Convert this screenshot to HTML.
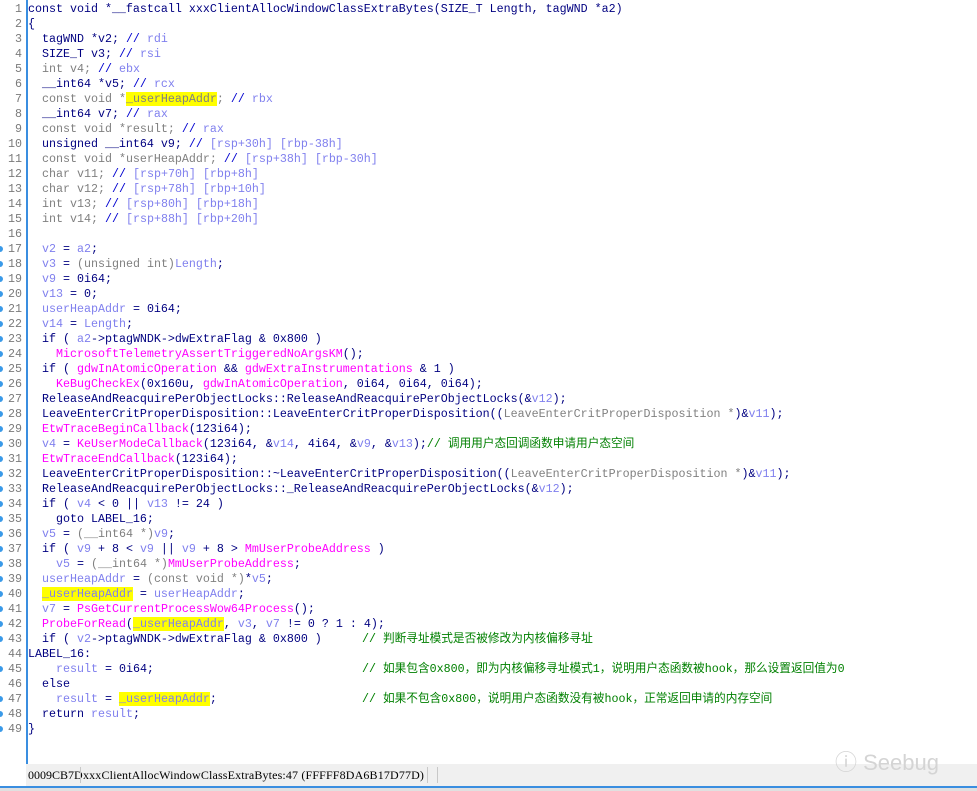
<!DOCTYPE html>
<html><head><meta charset="utf-8"><style>
body{margin:0;width:977px;height:791px;background:#fff;position:relative;overflow:hidden;font-family:"Liberation Mono","Noto Sans CJK SC",monospace;font-size:11.67px;}
.gut{position:absolute;left:26px;top:0;width:2px;height:764px;background:#3a8ee0;}
.l{position:absolute;left:0;height:15px;line-height:15px;width:977px;white-space:pre;margin-top:2px;}
.ln{position:absolute;left:0;width:22px;text-align:right;color:#7a7a7a;}
.dot{position:absolute;left:-3px;top:4px;width:6px;height:6px;border-radius:3px;background:#3a9ae8;}
.t{position:absolute;left:28px;color:#000080;}
.cm{position:absolute;left:362px;color:#008000;}
.g{color:#808080}.v{color:#8080ee}.f{color:#ff00ff}.c{color:#008000}.h{background:#ffff00}.cb{color:#0000d0}
.status{position:absolute;left:26px;top:764px;width:951px;height:22px;background:#f0f0f0;font-family:"Liberation Serif",serif;font-size:12px;line-height:22px;color:#000;}
.status span{position:absolute;top:0;white-space:nowrap}
.sep{position:absolute;top:3px;width:1px;height:16px;background:#c8c8c8}
.bot{position:absolute;left:0;top:786px;width:977px;height:2px;background:#3a8ee0}
.bot2{position:absolute;left:0;top:788px;width:977px;height:3px;background:#e0e0e0}
.wm{position:absolute;left:835px;top:745px;color:#d4d4d4;font-family:"Liberation Sans",sans-serif;font-size:22px;}
</style></head><body>
<div class="gut"></div>
<div class="l" style="top:0"><span class="ln">1</span><span class="t">const void *__fastcall xxxClientAllocWindowClassExtraBytes(SIZE_T Length, tagWND *a2)</span></div>
<div class="l" style="top:15px"><span class="ln">2</span><span class="t">{</span></div>
<div class="l" style="top:30px"><span class="ln">3</span><span class="t">  tagWND *v2; <span class="cb">//</span> <span class="v">rdi</span></span></div>
<div class="l" style="top:45px"><span class="ln">4</span><span class="t">  SIZE_T v3; <span class="cb">//</span> <span class="v">rsi</span></span></div>
<div class="l" style="top:60px"><span class="ln">5</span><span class="t">  <span class="g">int v4;</span> <span class="cb">//</span> <span class="v">ebx</span></span></div>
<div class="l" style="top:75px"><span class="ln">6</span><span class="t">  __int64 *v5; <span class="cb">//</span> <span class="v">rcx</span></span></div>
<div class="l" style="top:90px"><span class="ln">7</span><span class="t">  <span class="g">const void *<span class="h">_userHeapAddr</span>;</span> <span class="cb">//</span> <span class="v">rbx</span></span></div>
<div class="l" style="top:105px"><span class="ln">8</span><span class="t">  __int64 v7; <span class="cb">//</span> <span class="v">rax</span></span></div>
<div class="l" style="top:120px"><span class="ln">9</span><span class="t">  <span class="g">const void *result;</span> <span class="cb">//</span> <span class="v">rax</span></span></div>
<div class="l" style="top:135px"><span class="ln">10</span><span class="t">  unsigned __int64 v9; <span class="cb">//</span> <span class="v">[rsp+30h] [rbp-38h]</span></span></div>
<div class="l" style="top:150px"><span class="ln">11</span><span class="t">  <span class="g">const void *userHeapAddr;</span> <span class="cb">//</span> <span class="v">[rsp+38h] [rbp-30h]</span></span></div>
<div class="l" style="top:165px"><span class="ln">12</span><span class="t">  <span class="g">char v11;</span> <span class="cb">//</span> <span class="v">[rsp+70h] [rbp+8h]</span></span></div>
<div class="l" style="top:180px"><span class="ln">13</span><span class="t">  <span class="g">char v12;</span> <span class="cb">//</span> <span class="v">[rsp+78h] [rbp+10h]</span></span></div>
<div class="l" style="top:195px"><span class="ln">14</span><span class="t">  <span class="g">int v13;</span> <span class="cb">//</span> <span class="v">[rsp+80h] [rbp+18h]</span></span></div>
<div class="l" style="top:210px"><span class="ln">15</span><span class="t">  <span class="g">int v14;</span> <span class="cb">//</span> <span class="v">[rsp+88h] [rbp+20h]</span></span></div>
<div class="l" style="top:225px"><span class="ln">16</span></div>
<div class="l" style="top:240px"><i class="dot"></i><span class="ln">17</span><span class="t">  <span class="v">v2</span> = <span class="v">a2</span>;</span></div>
<div class="l" style="top:255px"><i class="dot"></i><span class="ln">18</span><span class="t">  <span class="v">v3</span> = <span class="g">(unsigned int)</span><span class="v">Length</span>;</span></div>
<div class="l" style="top:270px"><i class="dot"></i><span class="ln">19</span><span class="t">  <span class="v">v9</span> = 0i64;</span></div>
<div class="l" style="top:285px"><i class="dot"></i><span class="ln">20</span><span class="t">  <span class="v">v13</span> = 0;</span></div>
<div class="l" style="top:300px"><i class="dot"></i><span class="ln">21</span><span class="t">  <span class="v">userHeapAddr</span> = 0i64;</span></div>
<div class="l" style="top:315px"><i class="dot"></i><span class="ln">22</span><span class="t">  <span class="v">v14</span> = <span class="v">Length</span>;</span></div>
<div class="l" style="top:330px"><i class="dot"></i><span class="ln">23</span><span class="t">  if ( <span class="v">a2</span>-&gt;ptagWNDK-&gt;dwExtraFlag &amp; 0x800 )</span></div>
<div class="l" style="top:345px"><i class="dot"></i><span class="ln">24</span><span class="t">    <span class="f">MicrosoftTelemetryAssertTriggeredNoArgsKM</span>();</span></div>
<div class="l" style="top:360px"><i class="dot"></i><span class="ln">25</span><span class="t">  if ( <span class="f">gdwInAtomicOperation</span> &amp;&amp; <span class="f">gdwExtraInstrumentations</span> &amp; 1 )</span></div>
<div class="l" style="top:375px"><i class="dot"></i><span class="ln">26</span><span class="t">    <span class="f">KeBugCheckEx</span>(0x160u, <span class="f">gdwInAtomicOperation</span>, 0i64, 0i64, 0i64);</span></div>
<div class="l" style="top:390px"><i class="dot"></i><span class="ln">27</span><span class="t">  ReleaseAndReacquirePerObjectLocks::ReleaseAndReacquirePerObjectLocks(&amp;<span class="v">v12</span>);</span></div>
<div class="l" style="top:405px"><i class="dot"></i><span class="ln">28</span><span class="t">  LeaveEnterCritProperDisposition::LeaveEnterCritProperDisposition((<span class="g">LeaveEnterCritProperDisposition *</span>)&amp;<span class="v">v11</span>);</span></div>
<div class="l" style="top:420px"><i class="dot"></i><span class="ln">29</span><span class="t">  <span class="f">EtwTraceBeginCallback</span>(123i64);</span></div>
<div class="l" style="top:435px"><i class="dot"></i><span class="ln">30</span><span class="t">  <span class="v">v4</span> = <span class="f">KeUserModeCallback</span>(123i64, &amp;<span class="v">v14</span>, 4i64, &amp;<span class="v">v9</span>, &amp;<span class="v">v13</span>);<span class="c">// 调用用户态回调函数申请用户态空间</span></span></div>
<div class="l" style="top:450px"><i class="dot"></i><span class="ln">31</span><span class="t">  <span class="f">EtwTraceEndCallback</span>(123i64);</span></div>
<div class="l" style="top:465px"><i class="dot"></i><span class="ln">32</span><span class="t">  LeaveEnterCritProperDisposition::~LeaveEnterCritProperDisposition((<span class="g">LeaveEnterCritProperDisposition *</span>)&amp;<span class="v">v11</span>);</span></div>
<div class="l" style="top:480px"><i class="dot"></i><span class="ln">33</span><span class="t">  ReleaseAndReacquirePerObjectLocks::_ReleaseAndReacquirePerObjectLocks(&amp;<span class="v">v12</span>);</span></div>
<div class="l" style="top:495px"><i class="dot"></i><span class="ln">34</span><span class="t">  if ( <span class="v">v4</span> &lt; 0 || <span class="v">v13</span> != 24 )</span></div>
<div class="l" style="top:510px"><i class="dot"></i><span class="ln">35</span><span class="t">    goto LABEL_16;</span></div>
<div class="l" style="top:525px"><i class="dot"></i><span class="ln">36</span><span class="t">  <span class="v">v5</span> = <span class="g">(__int64 *)</span><span class="v">v9</span>;</span></div>
<div class="l" style="top:540px"><i class="dot"></i><span class="ln">37</span><span class="t">  if ( <span class="v">v9</span> + 8 &lt; <span class="v">v9</span> || <span class="v">v9</span> + 8 &gt; <span class="f">MmUserProbeAddress</span> )</span></div>
<div class="l" style="top:555px"><i class="dot"></i><span class="ln">38</span><span class="t">    <span class="v">v5</span> = <span class="g">(__int64 *)</span><span class="f">MmUserProbeAddress</span>;</span></div>
<div class="l" style="top:570px"><i class="dot"></i><span class="ln">39</span><span class="t">  <span class="v">userHeapAddr</span> = <span class="g">(const void *)</span>*<span class="v">v5</span>;</span></div>
<div class="l" style="top:585px"><i class="dot"></i><span class="ln">40</span><span class="t">  <span class="v h">_userHeapAddr</span> = <span class="v">userHeapAddr</span>;</span></div>
<div class="l" style="top:600px"><i class="dot"></i><span class="ln">41</span><span class="t">  <span class="v">v7</span> = <span class="f">PsGetCurrentProcessWow64Process</span>();</span></div>
<div class="l" style="top:615px"><i class="dot"></i><span class="ln">42</span><span class="t">  <span class="f">ProbeForRead</span>(<span class="v h">_userHeapAddr</span>, <span class="v">v3</span>, <span class="v">v7</span> != 0 ? 1 : 4);</span></div>
<div class="l" style="top:630px"><i class="dot"></i><span class="ln">43</span><span class="t">  if ( <span class="v">v2</span>-&gt;ptagWNDK-&gt;dwExtraFlag &amp; 0x800 )</span><span class="cm">// 判断寻址模式是否被修改为内核偏移寻址</span></div>
<div class="l" style="top:645px"><span class="ln">44</span><span class="t">LABEL_16:</span></div>
<div class="l" style="top:660px"><i class="dot"></i><span class="ln">45</span><span class="t">    <span class="v">result</span> = 0i64;</span><span class="cm">// 如果包含0x800，即为内核偏移寻址模式1，说明用户态函数被hook，那么设置返回值为0</span></div>
<div class="l" style="top:675px"><span class="ln">46</span><span class="t">  else</span></div>
<div class="l" style="top:690px"><i class="dot"></i><span class="ln">47</span><span class="t">    <span class="v">result</span> = <span class="v h">_userHeapAddr</span>;</span><span class="cm">// 如果不包含0x800，说明用户态函数没有被hook，正常返回申请的内存空间</span></div>
<div class="l" style="top:705px"><i class="dot"></i><span class="ln">48</span><span class="t">  return <span class="v">result</span>;</span></div>
<div class="l" style="top:720px"><i class="dot"></i><span class="ln">49</span><span class="t">}</span></div>
<div class="status"><span style="left:2px">0009CB7D</span><i class="sep" style="left:54px"></i><span style="left:57px;letter-spacing:0.15px">xxxClientAllocWindowClassExtraBytes:47 (FFFFF8DA6B17D77D)</span><i class="sep" style="left:401px"></i><i class="sep" style="left:411px"></i></div>
<div class="wm">ⓘ Seebug</div>
<div class="bot"></div><div class="bot2"></div>
</body></html>
